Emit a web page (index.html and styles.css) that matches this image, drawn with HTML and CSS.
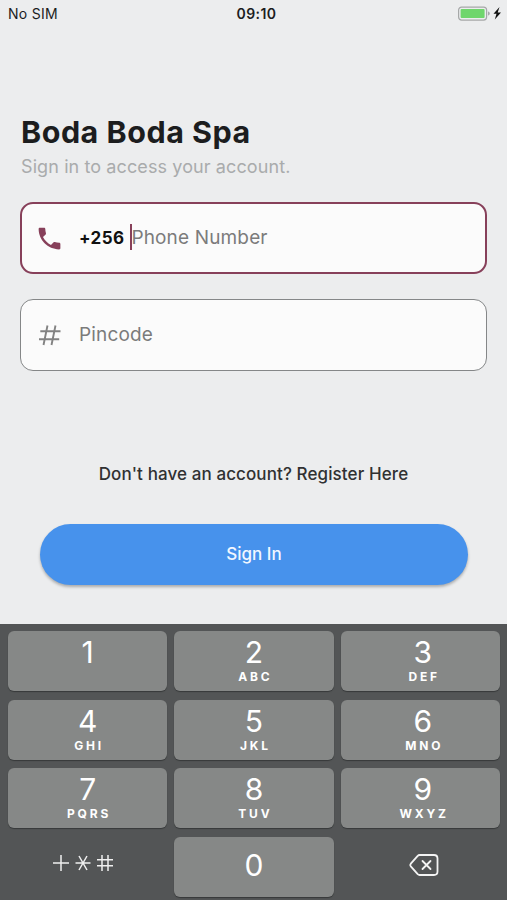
FILE: index.html
```html
<!DOCTYPE html>
<html lang="en">
<head>
    <meta charset="UTF-8">
    <meta name="viewport" content="width=device-width, initial-scale=1.0">
    <title>Boda Boda Spa</title>
    <link rel="stylesheet" href="styles.css">
</head>
<body>
    <!-- Status Bar -->
    <header class="status-bar">
        <span class="carrier">No SIM</span>
        <span class="clock">09:10</span>
        <span class="battery">
            <svg width="46" height="16" viewBox="0 0 46 16">
                <rect x="1.6" y="1.1" width="28" height="13" rx="3" fill="none" stroke="#a6a8a8" stroke-width="1.2"/>
                <rect x="3.6" y="3.1" width="24" height="9" rx="1" fill="#6fd66c"/>
                <path d="M31 5.500v4c1.300-.3 1.800-1.200 1.800-2s-.5-1.700-1.800-2z" fill="#a6a8a8"/>
                <path d="M42.500 1L36.500 7.700h3L37.800 13.500l6.200-7h-3.300z" fill="#111"/>
            </svg>
        </span>
    </header>

    <!-- Sign In Form -->
    <main class="sign-in">
        <h1>Boda Boda Spa</h1>
        <p class="subtitle">Sign in to access your account.</p>

        <div class="field field-active">
            <svg class="field-icon" width="29" height="29" viewBox="0 0 24 24" fill="#87405a">
                <path d="M6.620 10.790c1.440 2.830 3.760 5.140 6.590 6.590l2.200-2.200c.27-.27.67-.36 1.020-.24 1.120.37 2.330.57 3.570.57.550 0 1 .45 1 1V20c0 .55-.45 1-1 1-9.390 0-17-7.610-17-17 0-.55.45-1 1-1h3.500c.55 0 1 .45 1 1 0 1.250.2 2.450.57 3.570.11.350.03.740-.25 1.020l-2.200 2.200z"/>
            </svg>
            <span class="prefix">+256</span>
            <span class="caret"></span>
            <span class="placeholder">Phone Number</span>
        </div>

        <div class="field">
            <svg class="field-icon" width="29" height="29" viewBox="0 0 29 29" fill="none" stroke="#828282" stroke-width="1.900">
                <path d="M12.500 4.500L8.500 24M20.500 4.500L16.500 24M5.300 10.200H25.500M4 18.200H24.200"/>
            </svg>
            <span class="placeholder">Pincode</span>
        </div>

        <p class="register">Don't have an account? Register Here</p>
        <button class="sign-in-button">Sign In</button>
    </main>

    <!-- Number Pad -->
    <section class="keypad">
        <div class="key"><b>1</b></div>
        <div class="key"><b>2</b><small>ABC</small></div>
        <div class="key key-right"><b>3</b><small>DEF</small></div>
        <div class="key"><b>4</b><small>GHI</small></div>
        <div class="key"><b>5</b><small>JKL</small></div>
        <div class="key key-right"><b>6</b><small>MNO</small></div>
        <div class="key"><b>7</b><small>PQRS</small></div>
        <div class="key"><b>8</b><small>TUV</small></div>
        <div class="key key-right"><b>9</b><small>WXYZ</small></div>
        <div class="key key-plain">
            <svg class="symbols" width="62" height="18" viewBox="0 0 62 18" fill="none" stroke="#f0f0f0" stroke-width="1.500">
                <path d="M1 9H17M9 1V17"/>
                <path d="M23.500 9H38.500M27 2L35 16M35 2L27 16"/>
                <path d="M45 5.800H61M45 11.800H61M50 1V17M56 1V17"/>
            </svg>
        </div>
        <div class="key key-zero"><b>0</b></div>
        <div class="key key-plain">
            <svg class="delete" width="30" height="22" viewBox="0 0 30 22" fill="none" stroke="#f4f4f4" stroke-width="1.800" stroke-linejoin="round" stroke-linecap="round">
                <path d="M10.500 1H25Q28.500 1 28.500 4.500V17.500Q28.500 21 25 21H10.500Q9.500 21 8.700 20.200L1.800 12.300Q.8 11 1.800 9.700L8.700 1.800Q9.500 1 10.500 1Z"/>
                <path d="M13.500 7L21.500 15M21.500 7L13.500 15"/>
            </svg>
        </div>
    </section>
</body>
</html>
```

FILE: styles.css
```css
/* General Styles */
* {
    box-sizing: border-box;
}

body {
    font-family: Inter, "Liberation Sans", sans-serif;
    margin: 0;
    background: #ecedee;
    color: #1c1d1e;
    height: 900px;
    display: flex;
    flex-direction: column;
    overflow: hidden;
}

/* Status Bar */
.status-bar {
    height: 27px;
    padding: 0 4px 0 8px;
    display: grid;
    grid-template-columns: 1fr auto 1fr;
    align-items: center;
    font-size: 14px;
}

.carrier {
    letter-spacing: 0.3px;
}

.clock {
    padding-left: 2px;
    font-weight: 600;
    letter-spacing: 0.4px;
}

.battery {
    display: flex;
    justify-content: flex-end;
}

/* Sign In Form */
.sign-in {
    height: 597px;
    padding: 87px 20px 0;
    display: flex;
    flex-direction: column;
}

h1 {
    margin: 0 0 0 1px;
    font-size: 30.5px;
    line-height: 36px;
    font-weight: 700;
    letter-spacing: 0.5px;
}

.subtitle {
    margin: 6px 0 24px 1px;
    font-size: 18px;
    line-height: 22px;
    letter-spacing: 0.1px;
    color: #a9abac;
}

.field {
    height: 72px;
    padding: 0 14px;
    margin-bottom: 24px;
    display: flex;
    align-items: center;
    background: #fbfbfb;
    border: 1px solid #858788;
    border-radius: 13px;
    font-size: 19px;
}

.field-active {
    margin-bottom: 25px;
    padding: 0 13px;
    border: 2px solid #87405a;
}

.field-icon {
    margin-right: 15px;
}

.prefix {
    font-size: 17px;
    font-weight: 700;
    letter-spacing: 0.4px;
    color: #111;
}

.caret {
    width: 2px;
    height: 26px;
    margin: -3px -1px 0 6px;
    background: #87405a;
}

.placeholder {
    margin-top: -1px;
    letter-spacing: 0.15px;
    color: #7b7b7b;
}

.register {
    margin: 68px 0 39px;
    font-size: 17px;
    line-height: 22px;
    font-weight: 500;
    letter-spacing: 0.1px;
    text-align: center;
    color: #303132;
}

.sign-in-button {
    height: 61px;
    margin: 0 19px 0 20px;
    padding: 0 0 1px;
    border: none;
    border-radius: 31px;
    background: #4792ec;
    color: #f2f7ff;
    font-family: inherit;
    font-size: 17px;
    font-weight: 500;
    box-shadow: 0 2px 3px rgba(0, 0, 0, 0.28);
}

/* Number Pad */
.keypad {
    height: 276px;
    padding: 7px 7px 0 8px;
    display: grid;
    grid-template-columns: repeat(3, 1fr);
    grid-auto-rows: 60px;
    gap: 8.5px 7px;
    background: #535556;
}

.key {
    padding-top: 4px;
    display: flex;
    flex-direction: column;
    align-items: center;
    background: #868887;
    border-radius: 6px;
    box-shadow: 0 1px 1px #37393a;
    color: #fff;
}

.key b {
    font-size: 30px;
    line-height: 35px;
    font-weight: 400;
}

.key small {
    font-size: 12px;
    line-height: 13px;
    font-weight: 700;
    letter-spacing: 2.8px;
    margin-right: -2.8px;
}

.key-right {
    padding-left: 5px;
}

.key-zero,
.key-plain {
    padding: 0 0 2px;
    justify-content: center;
}

.key-plain {
    background: none;
    box-shadow: none;
}

.symbols {
    margin: -5px 0 0 -9px;
}

.delete {
    margin: -1px 0 0 7px;
}
```
